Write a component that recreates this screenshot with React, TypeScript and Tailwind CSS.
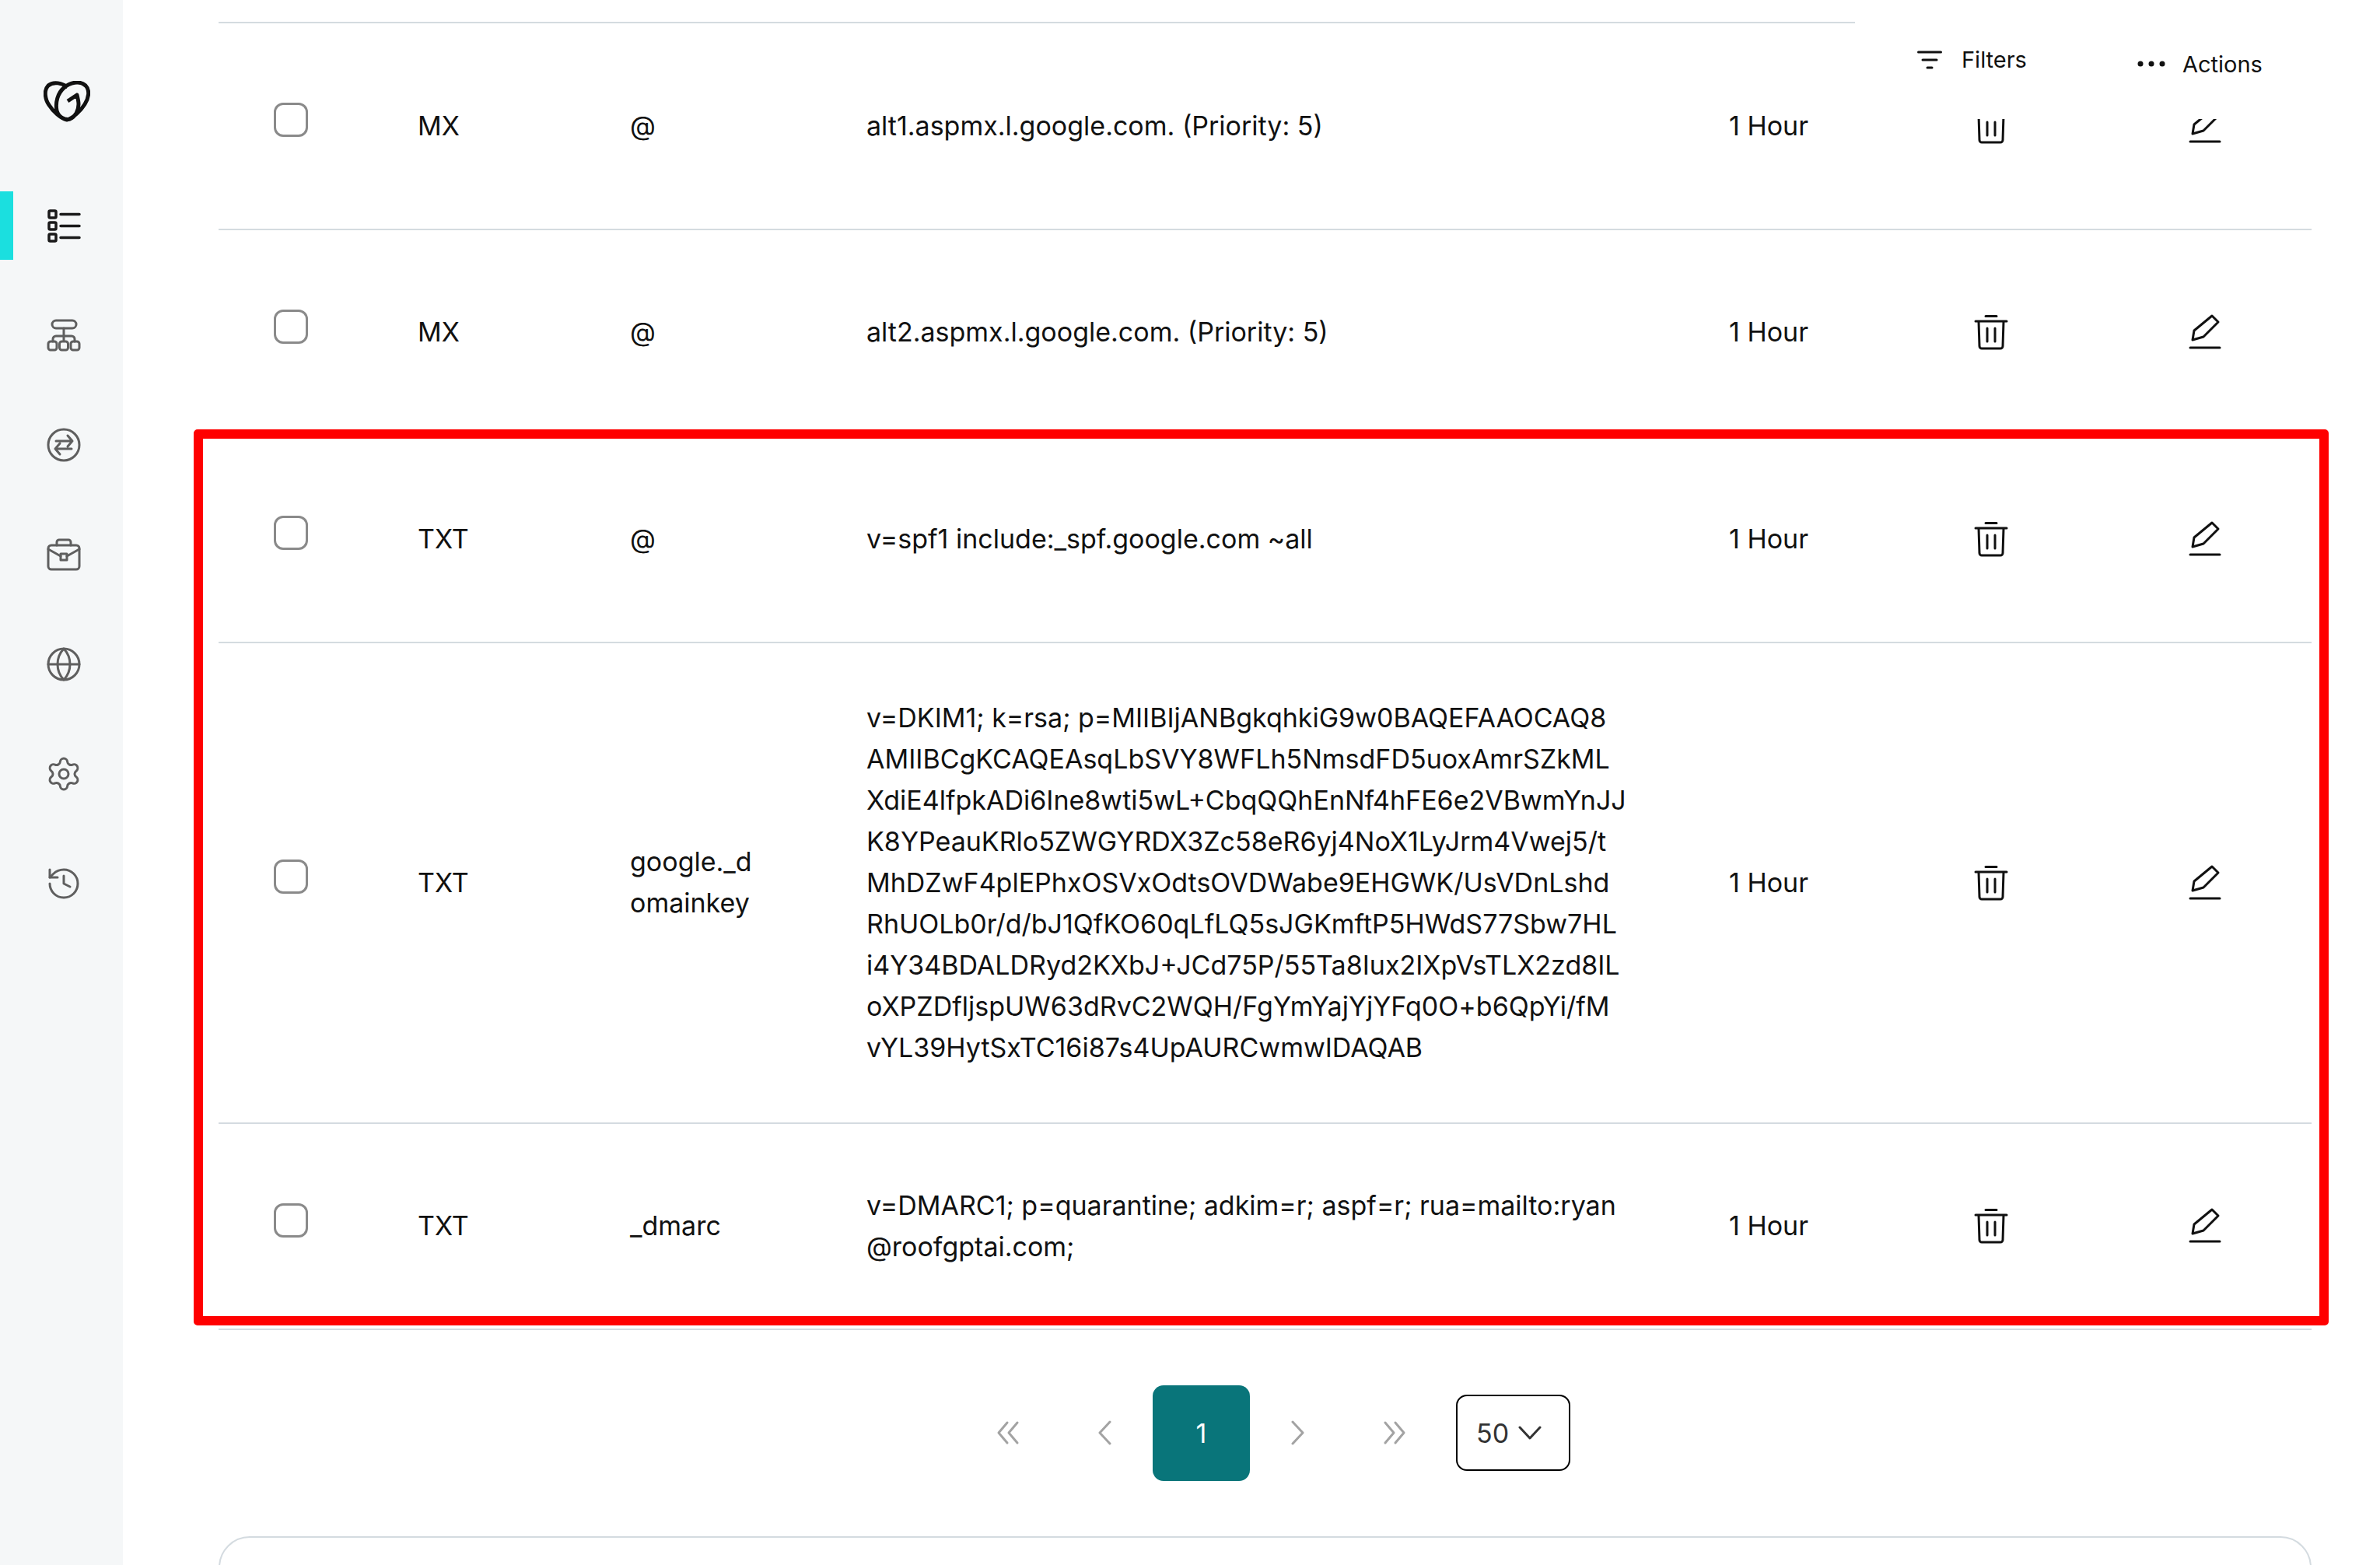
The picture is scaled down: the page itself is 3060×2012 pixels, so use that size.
import React from 'react';
import { Globe, History, Settings } from 'lucide-react';

type DnsRow = {
  type: string;
  name: string[];
  value: string[];
};

const rows: DnsRow[] = [
  { type: 'MX', name: ['@'], value: ['alt1.aspmx.l.google.com. (Priority: 5)'] },
  { type: 'MX', name: ['@'], value: ['alt2.aspmx.l.google.com. (Priority: 5)'] },
  { type: 'TXT', name: ['@'], value: ['v=spf1 include:_spf.google.com ~all'] },
  {
    type: 'TXT',
    name: ['google._d', 'omainkey'],
    value: [
      'v=DKIM1; k=rsa; p=MIIBIjANBgkqhkiG9w0BAQEFAAOCAQ8',
      'AMIIBCgKCAQEAsqLbSVY8WFLh5NmsdFD5uoxAmrSZkML',
      'XdiE4lfpkADi6Ine8wti5wL+CbqQQhEnNf4hFE6e2VBwmYnJJ',
      'K8YPeauKRlo5ZWGYRDX3Zc58eR6yj4NoX1LyJrm4Vwej5/t',
      'MhDZwF4plEPhxOSVxOdtsOVDWabe9EHGWK/UsVDnLshd',
      'RhUOLb0r/d/bJ1QfKO60qLfLQ5sJGKmftP5HWdS77Sbw7HL',
      'i4Y34BDALDRyd2KXbJ+JCd75P/55Ta8Iux2IXpVsTLX2zd8IL',
      'oXPZDfljspUW63dRvC2WQH/FgYmYajYjYFq0O+b6QpYi/fM',
      'vYL39HytSxTC16i87s4UpAURCwmwIDAQAB',
    ],
  },
  {
    type: 'TXT',
    name: ['_dmarc'],
    value: ['v=DMARC1; p=quarantine; adkim=r; aspf=r; rua=mailto:ryan', '@roofgptai.com;'],
  },
];

const Logo = () => (
  <svg viewBox="0 0 60 54" className="w-[60px] h-[54px]" fill="none" stroke="#111111" strokeWidth="5" strokeLinecap="butt" strokeLinejoin="round">
    <path d="M31 8C24 3 13 0 6 6C0 12 2 24 7 31C12 39 22 48 30 50C38 48 48 38 53 30C58 22 60 12 54 6C46 -1 34 2 26 9C18 16 15 28 17 38C19 46 27 51 34 49C41 46 45 38 45 30C45 26 44 22 43 18L31 26" />
  </svg>
);

const ListIcon = () => (
  <svg viewBox="0 0 48 48" className="w-12 h-12" fill="none" stroke="#1a1a1a" strokeWidth="3.5">
    <rect x="5" y="5" width="9" height="9" rx="1.5" />
    <rect x="5" y="20" width="9" height="9" rx="1.5" />
    <rect x="5" y="35" width="9" height="9" rx="1.5" />
    <path d="M20 9.5h24M20 24.5h24M20 39.5h24" strokeLinecap="round" />
  </svg>
);

const NetworkIcon = () => (
  <svg viewBox="0 0 48 48" className="w-12 h-12" fill="none" stroke="#5f5f5f" strokeWidth="3" strokeLinecap="round" strokeLinejoin="round">
    <rect x="9" y="5" width="31" height="10" rx="5" />
    <path d="M24 15v16M10 32v-3a4 4 0 0 1 4-4h20a4 4 0 0 1 4 4v3" />
    <rect x="4" y="32" width="11" height="11" rx="3" />
    <rect x="18.5" y="32" width="11" height="11" rx="3" />
    <rect x="33" y="32" width="11" height="11" rx="3" />
  </svg>
);

const TransferIcon = () => (
  <svg viewBox="0 0 48 48" className="w-12 h-12" fill="none" stroke="#5f5f5f" strokeWidth="3" strokeLinecap="round" strokeLinejoin="round">
    <circle cx="24" cy="24" r="20" />
    <path d="M14 19h21M29 12l6 7-6 7M34 29H13M19 22l-6 7 6 7" />
  </svg>
);

const BriefcaseIcon = () => (
  <svg viewBox="0 0 48 48" className="w-12 h-12" fill="none" stroke="#5f5f5f" strokeWidth="3" strokeLinecap="round" strokeLinejoin="round">
    <rect x="4" y="12" width="40" height="31" rx="4" />
    <path d="M15 12V8a3 3 0 0 1 3-3h12a3 3 0 0 1 3 3v4M4 17l16 9M44 17l-16 9" />
    <rect x="20" y="23" width="8" height="8" />
  </svg>
);

const TrashIcon = () => (
  <svg viewBox="0 0 48 48" className="w-12 h-12" fill="none" stroke="#111111" strokeWidth="3" strokeLinecap="round" strokeLinejoin="round">
    <path d="M17 3.5h14M4 10h40M8 10l1 32a3 3 0 0 0 3 3h24a3 3 0 0 0 3-3l1-32M19 19v17M29 19v17" />
  </svg>
);

const PencilIcon = () => (
  <svg viewBox="0 0 48 48" className="w-12 h-12" fill="none" stroke="#111111" strokeWidth="3" strokeLinecap="round" strokeLinejoin="round">
    <path d="M8 34l2-12L33 3l8 8-19 19zM5 44h38" />
  </svg>
);

const Chevron = ({ d, w }: { d: string; w: number }) => (
  <svg viewBox={`0 0 ${w} 32`} width={w} height={32} fill="none" stroke="#a3a3a3" strokeWidth="3" strokeLinecap="round" strokeLinejoin="round">
    <path d={d} />
  </svg>
);

const navIcons = [
  <NetworkIcon key="network" />,
  <TransferIcon key="transfer" />,
  <BriefcaseIcon key="briefcase" />,
  <Globe key="globe" className="w-12 h-12 text-[#5f5f5f]" strokeWidth={1.5} />,
  <Settings key="settings" className="w-12 h-12 text-[#5f5f5f]" strokeWidth={1.5} />,
  <History key="history" className="w-12 h-12 text-[#5f5f5f]" strokeWidth={1.5} />,
];

const App: React.FC = () => {
  return (
    <div className="relative flex w-[3060px] h-[2012px] overflow-hidden bg-white text-[#111111] font-['Inter',sans-serif] text-[34px] leading-[53px]">
      <aside className="w-[158px] shrink-0 bg-[#f5f7f8] flex flex-col">
        <div className="h-[246px] pt-[104px] pl-[56px]">
          <Logo />
        </div>
        <div className="relative h-[88px] pl-[6px] flex items-center justify-center">
          <div className="absolute left-0 top-0 h-full w-[17px] bg-[#1bdfdf]" />
          <ListIcon />
        </div>
        <div className="flex flex-col items-center gap-[93px] mt-[73px] pl-[6px]">{navIcons}</div>
      </aside>

      <main className="relative flex-1 pl-[123px] pr-[88px] pt-[28px]">
        <div className="border-t-2 border-[#d4dbe0]">
          {rows.map((row, i) => (
            <div
              key={i}
              className={`grid grid-cols-[256px_273px_304px_1109px_277px_120px_1fr] items-center border-b-2 border-[#d4dbe0] ${row.value.length > 2 ? 'py-[69.5px]' : 'min-h-[265.5px]'}`}
            >
              <div className="pl-[71px]">
                <div className="w-[44px] h-[44px] mb-[15px] rounded-[12px] border-[3px] border-[#8a8a8a] bg-white" />
              </div>
              <div className="mb-[1px]">{row.type}</div>
              <div className="mb-[1px]">
                {row.name.map((line) => (
                  <div key={line}>{line}</div>
                ))}
              </div>
              <div className={row.value.length === 1 ? 'mb-[1px]' : ''}>
                {row.value.map((line) => (
                  <div key={line} className="whitespace-nowrap">{line}</div>
                ))}
              </div>
              <div className="mb-[1px]">1 Hour</div>
              <div className="flex justify-center">
                <TrashIcon />
              </div>
              <div className="pl-[191px]">
                <PencilIcon />
              </div>
            </div>
          ))}
        </div>

        <div className="flex justify-center items-center mt-[70.5px]">
          <div className="w-[124px] h-[123px] flex items-center justify-center">
            <Chevron w={30} d="M14 3L3 16l11 13M27 3L16 16l11 13" />
          </div>
          <div className="w-[124px] h-[123px] flex items-center justify-center">
            <Chevron w={20} d="M17 2L4 16l13 14" />
          </div>
          <div className="w-[125px] h-[123px] rounded-[14px] bg-[#09757a] text-white flex items-center justify-center">1</div>
          <div className="w-[124px] h-[123px] flex items-center justify-center">
            <Chevron w={20} d="M3 2l13 14L3 30" />
          </div>
          <div className="w-[124px] h-[123px] flex items-center justify-center">
            <Chevron w={30} d="M3 3l11 13L3 29M16 3l11 13-11 13" />
          </div>
          <div className="ml-[17px] w-[147px] h-[98px] rounded-[14px] border-2 border-black flex items-center gap-[12px] pl-[24px] text-[#333333]">
            50
            <svg viewBox="0 0 30 18" className="w-[30px] h-[18px]" fill="none" stroke="#333333" strokeWidth="3" strokeLinecap="round" strokeLinejoin="round">
              <path d="M2 2l13 14L28 2" />
            </svg>
          </div>
        </div>

        <div className="mt-[71px] h-[200px] rounded-[40px] border-2 border-[#d4dbe0]" />

        <div className="absolute top-0 right-0 w-[675px] h-[153px] bg-white text-[29px] leading-[40px]">
          <svg viewBox="0 0 32 24" className="absolute left-[80px] top-[65px] w-[32px] h-[24px]" fill="none" stroke="#111111" strokeWidth="3" strokeLinecap="round">
            <path d="M1.5 2h29M7 12h18M13 22h6" />
          </svg>
          <span className="absolute left-[137px] top-[57px]">Filters</span>
          <svg viewBox="0 0 36 8" className="absolute left-[363px] top-[78px] w-[36px] h-[8px]" fill="#111111">
            <circle cx="4" cy="4" r="3.5" />
            <circle cx="18" cy="4" r="3.5" />
            <circle cx="32" cy="4" r="3.5" />
          </svg>
          <span className="absolute left-[421px] top-[63px]">Actions</span>
        </div>
      </main>

      {/* annotation frame */}
      <div className="absolute left-[249px] top-[552px] w-[2745px] h-[1152px] border-[12px] border-[#ff0000] rounded-[5px] pointer-events-none" />
    </div>
  );
};

export default App;
